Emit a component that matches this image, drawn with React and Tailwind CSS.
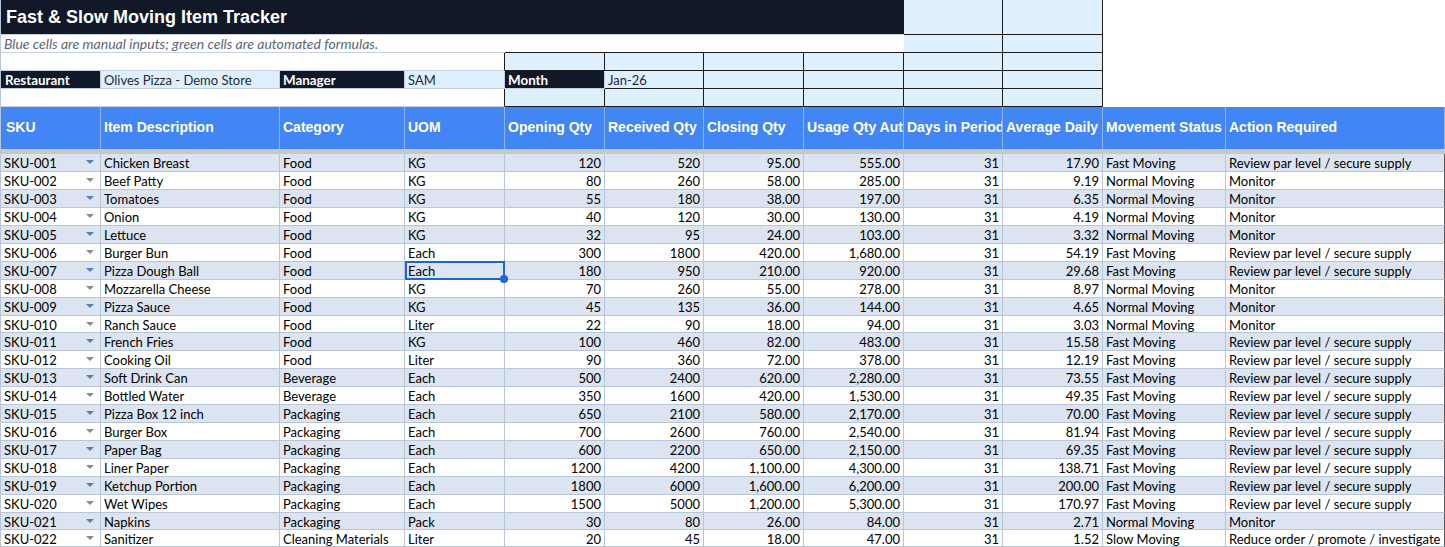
import React from "react";

const COLS = "grid grid-rows-[minmax(0,1fr)] grid-cols-[100px_179px_125px_100px_100px_99px_100px_100px_99px_100px_123px_219px]";

const REVIEW = "Review par level / secure supply";

// description, category, uom, opening, received, closing, usage, average, status
const ITEMS = [
  ["Chicken Breast", "Food", "KG", "120", "520", "95.00", "555.00", "17.90", "F"],
  ["Beef Patty", "Food", "KG", "80", "260", "58.00", "285.00", "9.19", "N"],
  ["Tomatoes", "Food", "KG", "55", "180", "38.00", "197.00", "6.35", "N"],
  ["Onion", "Food", "KG", "40", "120", "30.00", "130.00", "4.19", "N"],
  ["Lettuce", "Food", "KG", "32", "95", "24.00", "103.00", "3.32", "N"],
  ["Burger Bun", "Food", "Each", "300", "1800", "420.00", "1,680.00", "54.19", "F"],
  ["Pizza Dough Ball", "Food", "Each", "180", "950", "210.00", "920.00", "29.68", "F"],
  ["Mozzarella Cheese", "Food", "KG", "70", "260", "55.00", "278.00", "8.97", "N"],
  ["Pizza Sauce", "Food", "KG", "45", "135", "36.00", "144.00", "4.65", "N"],
  ["Ranch Sauce", "Food", "Liter", "22", "90", "18.00", "94.00", "3.03", "N"],
  ["French Fries", "Food", "KG", "100", "460", "82.00", "483.00", "15.58", "F"],
  ["Cooking Oil", "Food", "Liter", "90", "360", "72.00", "378.00", "12.19", "F"],
  ["Soft Drink Can", "Beverage", "Each", "500", "2400", "620.00", "2,280.00", "73.55", "F"],
  ["Bottled Water", "Beverage", "Each", "350", "1600", "420.00", "1,530.00", "49.35", "F"],
  ["Pizza Box 12 inch", "Packaging", "Each", "650", "2100", "580.00", "2,170.00", "70.00", "F"],
  ["Burger Box", "Packaging", "Each", "700", "2600", "760.00", "2,540.00", "81.94", "F"],
  ["Paper Bag", "Packaging", "Each", "600", "2200", "650.00", "2,150.00", "69.35", "F"],
  ["Liner Paper", "Packaging", "Each", "1200", "4200", "1,100.00", "4,300.00", "138.71", "F"],
  ["Ketchup Portion", "Packaging", "Each", "1800", "6000", "1,600.00", "6,200.00", "200.00", "F"],
  ["Wet Wipes", "Packaging", "Each", "1500", "5000", "1,200.00", "5,300.00", "170.97", "F"],
  ["Napkins", "Packaging", "Pack", "30", "80", "26.00", "84.00", "2.71", "N"],
  ["Sanitizer", "Cleaning Materials", "Liter", "20", "45", "18.00", "47.00", "1.52", "S"],
];

const STATUS = {
  F: ["Fast Moving", REVIEW],
  N: ["Normal Moving", "Monitor"],
  S: ["Slow Moving", "Reduce order / promote / investigate"],
};

const HEADERS = [
  "SKU", "Item Description", "Category", "UOM", "Opening Qty", "Received Qty",
  "Closing Qty", "Usage Qty Auto", "Days in Period", "Average Daily", "Movement Status", "Action Required",
];

// these rows are a pixel shorter in the sheet
const SHORT_ROWS = [9, 20, 21];

function InputCell({ children }) {
  return (
    <div className="h-full border-r border-b border-[#1b1b1b] bg-[#deeffd] pl-[3px] leading-[19px] text-[#1f2937] overflow-hidden whitespace-nowrap">
      {children}
    </div>
  );
}

function LabelCell({ children, className = "pl-[3px]" }) {
  return (
    <div className={`h-full border-r border-b border-[#c3d0df] bg-[#111827] text-[13.4px] font-bold text-white leading-[19px] whitespace-nowrap overflow-hidden ${className}`}>
      {children}
    </div>
  );
}

function ValueCell({ children }) {
  return (
    <div className="h-full border-r border-b border-[#c3d0df] bg-[#deeffd] pl-[3px] text-[#1f2937] leading-[19px] whitespace-nowrap overflow-hidden">
      {children}
    </div>
  );
}

function DataCell({ band, right, last, children }) {
  return (
    <div
      className={`h-full border-r border-b leading-[19px] whitespace-nowrap overflow-hidden text-black ${
        band ? "bg-[#dbe4f0]" : "bg-white"
      } ${right ? "text-right pr-[3px]" : "pl-[3px]"} ${last ? "border-r-[#555555] border-b-[#b9c6d8]" : "border-[#b9c6d8]"}`}
    >
      {children}
    </div>
  );
}

function Row({ item, index }) {
  const band = index % 2 === 0;
  const [desc, cat, uom, open, rec, close, usage, avg, st] = item;
  const sku = `SKU-${String(index + 1).padStart(3, "0")}`;
  const selected = index === 6;
  return (
    <div className={`${COLS} ${SHORT_ROWS.includes(index) ? "h-[17px]" : "h-[18px]"}`}>
      <DataCell band={band}>
        <div className="flex items-center justify-between pr-[6px]">
          <span>{sku}</span>
          <svg width="8" height="4" viewBox="0 0 8 4" className={`mb-[4px] ${band ? "text-[#4f81bd]" : "text-[#8a8a8a]"}`}>
            <path d="M0 0h8L4 4z" fill="currentColor" />
          </svg>
        </div>
      </DataCell>
      <DataCell band={band}>{desc}</DataCell>
      <DataCell band={band}>{cat}</DataCell>
      <div className="relative h-full">
        <DataCell band={band}>{uom}</DataCell>
        {selected && (
          <div className="absolute left-0 top-[-1px] right-0 bottom-0 z-10 border-2 border-[#1a66d8]">
            <div className="absolute -right-[5px] -bottom-[5px] size-[8px] rounded-full bg-[#1a66d8]" />
          </div>
        )}
      </div>
      <DataCell band={band} right>{open}</DataCell>
      <DataCell band={band} right>{rec}</DataCell>
      <DataCell band={band} right>{close}</DataCell>
      <DataCell band={band} right>{usage}</DataCell>
      <DataCell band={band} right>31</DataCell>
      <DataCell band={band} right>{avg}</DataCell>
      <DataCell band={band}>{STATUS[st][0]}</DataCell>
      <DataCell band={band} last>{STATUS[st][1]}</DataCell>
    </div>
  );
}

export default function App() {
  return (
    <div className="h-[547px] w-[1445px] overflow-hidden border-l border-[#b9c6d8] bg-white font-['Lato',sans-serif] text-[13px]">
      {/* title + note */}
      <div className={`${COLS} h-[35px]`}>
        <div className="col-span-8 bg-[#111827] pl-[5px] border-b border-[#c3d0df] font-['Liberation_Sans',sans-serif] text-[18px] font-bold text-white leading-[35px]">
          Fast &amp; Slow Moving Item Tracker
        </div>
        <InputCell />
        <InputCell />
      </div>
      <div className={`${COLS} h-[18px]`}>
        <div className="col-span-4 border-b border-[#c3d0df] pl-[3px] text-[14px] italic text-[#5b6675] leading-[17px] whitespace-nowrap">
          Blue cells are manual inputs; green cells are automated formulas.
        </div>
        <div className="col-span-4 border-b border-[#1b1b1b]" />
        <InputCell />
        <InputCell />
      </div>

      {/* restaurant info */}
      <div className={`${COLS} h-[18px]`}>
        <div className="col-span-4 border-r border-r-[#1b1b1b] border-b border-b-[#c3d0df] bg-white" />
        {[0, 1, 2, 3, 4, 5].map((i) => <InputCell key={i} />)}
      </div>
      <div className={`${COLS} h-[18px]`}>
        <LabelCell className="pl-[4px]">Restaurant</LabelCell>
        <ValueCell>Olives Pizza - Demo Store</ValueCell>
        <LabelCell>Manager</LabelCell>
        <ValueCell>SAM</ValueCell>
        <LabelCell>Month</LabelCell>
        <InputCell>Jan-26</InputCell>
        {[0, 1, 2, 3].map((i) => <InputCell key={i} />)}
      </div>
      <div className={`${COLS} h-[18px]`}>
        <div className="col-span-4 border-r border-r-[#1b1b1b] border-b border-b-[#c3d0df] bg-white" />
        {[0, 1, 2, 3, 4, 5].map((i) => <InputCell key={i} />)}
      </div>

      {/* table head */}
      <div className={`${COLS} h-[42px]`}>
        {HEADERS.map((h, i) => (
          <div
            key={h}
            className={`border-r border-[#8fb3f0] bg-[#4285f4] pb-[2px] flex items-center overflow-hidden whitespace-nowrap font-['Liberation_Sans',sans-serif] text-[14px] font-bold text-white ${
              i === 0 ? "pl-[5px]" : "pl-[3px]"
            }`}
          >
            {h}
          </div>
        ))}
      </div>
      <div className="h-[5px] bg-[#c8c8c8]" />

      {ITEMS.map((item, i) => (
        <Row key={i} item={item} index={i} />
      ))}
    </div>
  );
}
